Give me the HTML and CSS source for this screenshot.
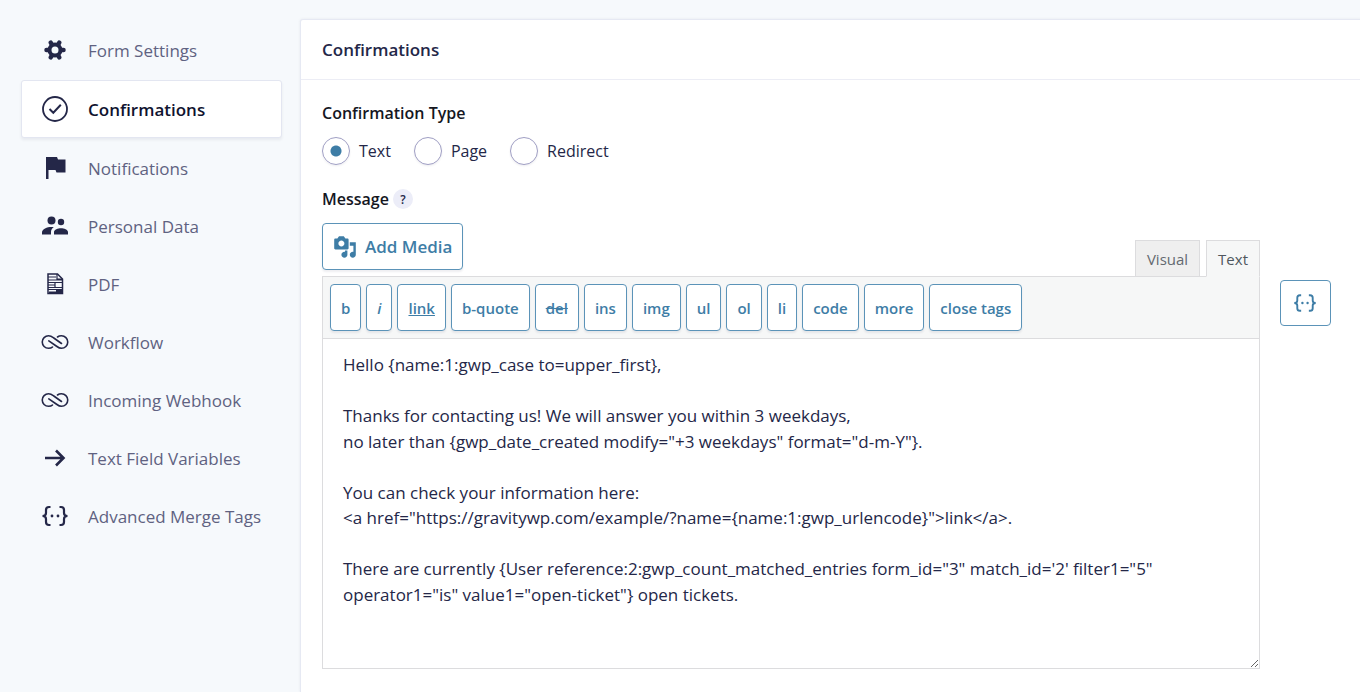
FILE: index.html
```html
<!DOCTYPE html>
<html lang="en">
<head>
    <meta charset="UTF-8">
    <meta name="viewport" content="width=device-width, initial-scale=1.0">
    <title>Confirmations</title>
    <link rel="stylesheet" href="styles.css">
</head>
<body>
    <svg class="symbols" aria-hidden="true">
        <symbol id="infinity" viewBox="0 0 28 28">
            <path d="M11.500 19C10.300 20.100 9.300 20.300 7.500 20.300A6.200 6.200 0 0 1 7.500 7.800C9.800 7.800 11 8.700 12.800 10L20.500 15.500M16.500 9C17.700 8.100 18.700 7.800 20.500 7.800A6.200 6.200 0 0 1 20.500 20.300C18.200 20.300 17 19.300 15.200 18L7.800 12.900" fill="none" stroke="currentColor" stroke-width="1.600" stroke-linecap="round"/>
        </symbol>
        <symbol id="merge" viewBox="0 0 28 28">
            <path d="M9.500 5H8Q5 5 5 8V11Q5 14 1.500 14Q5 14 5 17V20Q5 23 8 23H9.500M18.500 5H20Q23 5 23 8V11Q23 14 26.500 14Q23 14 23 17V20Q23 23 20 23H18.500" fill="none" stroke="currentColor" stroke-width="2.200"/>
            <circle cx="11" cy="14" r="1.400" fill="currentColor"/>
            <circle cx="17" cy="14" r="1.400" fill="currentColor"/>
        </symbol>
    </svg>
    <div class="page">
        <nav class="sidebar">
            <a class="nav-item" href="#">
                <svg class="nav-icon" viewBox="0 0 28 28">
                    <circle cx="14" cy="14" r="5.500" fill="none" stroke="currentColor" stroke-width="4"/>
                    <path d="M21 14h1.500M17.500 20.100l.8 1.300M10.500 20.100l-.8 1.300M7 14H5.500M10.500 7.900l-.8-1.300M17.500 7.900l.8-1.300" stroke="currentColor" stroke-width="4.500" stroke-linecap="round"/>
                </svg>
                Form Settings
            </a>
            <a class="nav-item active" href="#">
                <svg class="nav-icon" viewBox="0 0 28 28">
                    <circle cx="14" cy="14" r="12" fill="none" stroke="currentColor" stroke-width="1.800"/>
                    <path d="M8.500 14l3.800 3.800 7.500-8" fill="none" stroke="currentColor" stroke-width="2"/>
                </svg>
                Confirmations
            </a>
            <a class="nav-item" href="#">
                <svg class="nav-icon" viewBox="0 0 28 28">
                    <path d="M5 3h11l1 2.500h7.500v13h-9L14.500 16H7.500v9H5z" fill="currentColor"/>
                </svg>
                Notifications
            </a>
            <a class="nav-item" href="#">
                <svg class="nav-icon" viewBox="0 0 28 28">
                    <circle cx="10.500" cy="8.500" r="4" fill="currentColor"/>
                    <circle cx="20" cy="10" r="3.200" fill="currentColor"/>
                    <path d="M1 22.500v-2C1 17 6 15 10.500 15c1 0 1.600.1 2.300.2-1.700 1-2.800 2.600-2.800 4.800v2.500zM13 22.500V20c0-2.500 4-3.800 7-3.800s7 1.300 7 3.800v2.500z" fill="currentColor"/>
                </svg>
                Personal Data
            </a>
            <a class="nav-item" href="#">
                <svg class="nav-icon" viewBox="0 0 28 28">
                    <path d="M7 4h9.500L21.500 9v14.500H7z" fill="none" stroke="currentColor" stroke-width="1.500"/>
                    <path d="M16 4v5h5M7 7h8M7 10h14M7 12.500h14M7 15h7M7 17.500h7M14 12.500v5h7M7 19.500h14" fill="none" stroke="currentColor" stroke-width="1.200"/>
                    <path d="M7 20h8v1.500H8v2h14V19H7z" fill="currentColor"/>
                </svg>
                PDF
            </a>
            <a class="nav-item" href="#">
                <svg class="nav-icon"><use href="#infinity"/></svg>
                Workflow
            </a>
            <a class="nav-item" href="#">
                <svg class="nav-icon"><use href="#infinity"/></svg>
                Incoming Webhook
            </a>
            <a class="nav-item" href="#">
                <svg class="nav-icon" viewBox="0 0 28 28">
                    <path d="M4 14h18M15 6.500l7.500 7.500-7.500 7.500" fill="none" stroke="currentColor" stroke-width="2.600"/>
                </svg>
                Text Field Variables
            </a>
            <a class="nav-item" href="#">
                <svg class="nav-icon"><use href="#merge"/></svg>
                Advanced Merge Tags
            </a>
        </nav>

        <main class="panel">
            <h1 class="panel-title">Confirmations</h1>
            <form class="panel-body">
                <fieldset class="type-field">
                    <legend class="field-label">Confirmation Type</legend>
                    <div class="radios">
                        <label class="radio"><input type="radio" name="type" checked>Text</label>
                        <label class="radio"><input type="radio" name="type">Page</label>
                        <label class="radio"><input type="radio" name="type">Redirect</label>
                    </div>
                </fieldset>

                <div class="message-head">
                    <label class="field-label" for="message">Message</label>
                    <button type="button" class="help">?</button>
                </div>

                <div class="message-row">
                    <div class="editor">
                        <div class="editor-tools">
                            <button type="button" class="btn add-media">
                                <svg class="media-icon" viewBox="0 0 20 20">
                                    <path d="M13 11V4c0-.55-.45-1-1-1h-1.670L9 1H5L3.670 3H2c-.55 0-1 .45-1 1v7c0 .55.45 1 1 1h10c.55 0 1-.45 1-1zM7 4.500c1.380 0 2.500 1.120 2.500 2.500S8.380 9.500 7 9.500 4.500 8.380 4.500 7 5.620 4.500 7 4.500zM14 6h5v10.500c0 1.380-1.120 2.500-2.500 2.500S14 17.880 14 16.500s1.120-2.500 2.500-2.500c.17 0 .34.02.5.05V9h-3V6zm-4 8.050V13h2v3.500c0 1.380-1.120 2.500-2.500 2.500S7 17.880 7 16.500 8.120 14 9.500 14c.17 0 .34.02.5.05z" fill="currentColor"/>
                                </svg>
                                Add Media
                            </button>
                            <div class="tabs">
                                <button type="button" class="tab">Visual</button>
                                <button type="button" class="tab current">Text</button>
                            </div>
                        </div>
                        <div class="toolbar">
                            <button type="button" class="btn">b</button>
                            <button type="button" class="btn italic">i</button>
                            <button type="button" class="btn underline">link</button>
                            <button type="button" class="btn">b-quote</button>
                            <button type="button" class="btn strike">del</button>
                            <button type="button" class="btn">ins</button>
                            <button type="button" class="btn">img</button>
                            <button type="button" class="btn">ul</button>
                            <button type="button" class="btn">ol</button>
                            <button type="button" class="btn">li</button>
                            <button type="button" class="btn">code</button>
                            <button type="button" class="btn">more</button>
                            <button type="button" class="btn">close tags</button>
                        </div>
                        <textarea id="message" class="message" rows="12" spellcheck="false">Hello {name:1:gwp_case to=upper_first},

Thanks for contacting us! We will answer you within 3 weekdays,
no later than {gwp_date_created modify="+3 weekdays" format="d-m-Y"}.

You can check your information here:
&lt;a href="https://gravitywp.com/example/?name={name:1:gwp_urlencode}"&gt;link&lt;/a&gt;.

There are currently {User reference:2:gwp_count_matched_entries form_id="3" match_id='2' filter1="5" operator1="is" value1="open-ticket"} open tickets.</textarea>
                    </div>
                    <button type="button" class="btn merge-btn" aria-label="Insert merge tag">
                        <svg class="merge-icon"><use href="#merge"/></svg>
                    </button>
                </div>
            </form>
        </main>
    </div>
</body>
</html>
```

FILE: styles.css
```css
* {
    box-sizing: border-box;
}
body {
    margin: 0;
    background: #f6f9fc;
    color: #242748;
    font-family: "Open Sans", "Noto Sans", sans-serif;
    font-size: 16px;
}
button, textarea {
    font-family: inherit;
}
.symbols {
    display: none;
}
.page {
    display: flex;
    gap: 18px;
    min-height: 100vh;
    padding: 19px 0 0 21px;
    overflow: hidden;
}

/* sidebar */
.sidebar {
    flex: none;
    width: 261px;
    padding-top: 2px;
}
.nav-item {
    display: flex;
    align-items: center;
    gap: 19px;
    height: 58px;
    padding: 0 19px;
    border: 1px solid transparent;
    color: #5f6281;
    font-size: 17px;
    text-decoration: none;
    white-space: nowrap;
}
.nav-item.active {
    margin: 1px 0;
    background: #fff;
    border-color: #e3e6f1;
    border-radius: 3px;
    box-shadow: 0 2px 3px rgba(36, 39, 72, 0.07);
    color: #10132f;
    font-weight: 600;
}
.nav-icon {
    flex: none;
    width: 28px;
    height: 28px;
    color: #242748;
}

/* main panel */
.panel {
    flex: 1;
    min-width: 0;
    margin-right: -4px;
    background: #fff;
    border: 1px solid #e6e9f3;
    border-bottom: 0;
    border-radius: 3px 0 0 0;
    box-shadow: 0 0 3px rgba(36, 39, 72, 0.08);
}
.panel-title {
    margin: 0;
    padding: 0 21px;
    border-bottom: 1px solid #ecedf5;
    color: #242748;
    font-size: 17px;
    font-weight: 600;
    line-height: 59px;
}
.panel-body {
    padding: 21px 32px 22px 21px;
}
.field-label {
    padding: 0;
    color: #15171f;
    font-weight: 600;
    line-height: 24px;
}
.type-field {
    margin: 0;
    padding: 0;
    border: 0;
}
.radios {
    display: flex;
    gap: 23px;
    padding-top: 12px;
}
.radio {
    display: flex;
    align-items: center;
    gap: 9px;
}
.radio input {
    appearance: none;
    width: 28px;
    height: 28px;
    margin: 0;
    border: 1px solid #a09fc4;
    border-radius: 50%;
    background: #fff;
    box-shadow: 0 1px 2px rgba(36, 39, 72, 0.08);
}
.radio input:checked {
    background: radial-gradient(circle, #3e7da6 5px, #fff 6px);
}
.message-head {
    display: flex;
    align-items: center;
    gap: 4px;
    padding: 22px 0 12px;
}
.help {
    width: 20px;
    height: 20px;
    padding: 0;
    border: 0;
    border-radius: 50%;
    background: #ecedf8;
    color: #242748;
    font-size: 12px;
    font-weight: 600;
}

/* editor */
.message-row {
    display: flex;
    align-items: flex-start;
    gap: 20px;
}
.editor {
    flex: 1;
    min-width: 0;
}
.btn {
    height: 47px;
    padding: 0 10px;
    background: #fff;
    border: 1px solid #5b93b8;
    border-radius: 4px;
    box-shadow: 0 2px 2px rgba(36, 39, 72, 0.08);
    color: #3e7da6;
    font-size: 15px;
    font-weight: 600;
    cursor: pointer;
}
.editor-tools {
    display: flex;
    justify-content: space-between;
    align-items: flex-end;
}
.add-media {
    display: flex;
    align-items: center;
    gap: 8px;
    margin-bottom: 6px;
    font-size: 17px;
}
.media-icon {
    width: 24px;
    height: 24px;
}
.tabs {
    display: flex;
    gap: 6px;
    margin-bottom: -1px;
}
.tab {
    height: 37px;
    padding: 0 11px;
    background: #efefef;
    border: 1px solid #dcdcde;
    color: #646970;
    font-size: 15px;
}
.tab.current {
    background: #f6f7f7;
    border-bottom-color: #f6f7f7;
    color: #50575e;
}
.toolbar {
    display: flex;
    flex-wrap: wrap;
    gap: 5px;
    padding: 7px;
    background: #f6f7f7;
    border: 1px solid #dcdcde;
    border-bottom: 0;
}
.italic {
    font-style: italic;
}
.underline {
    text-decoration: underline;
}
.strike {
    text-decoration: line-through;
}
.message {
    display: block;
    width: 100%;
    padding: 13px 20px 10px;
    background: #fff;
    border: 1px solid #dcdcde;
    color: #242748;
    font-size: 17px;
    line-height: 1.5;
    resize: vertical;
}
.merge-btn {
    width: 51px;
    height: 46px;
    margin-top: 57px;
    box-shadow: none;
}
.merge-icon {
    display: block;
    width: 28px;
    height: 24px;
}
```
